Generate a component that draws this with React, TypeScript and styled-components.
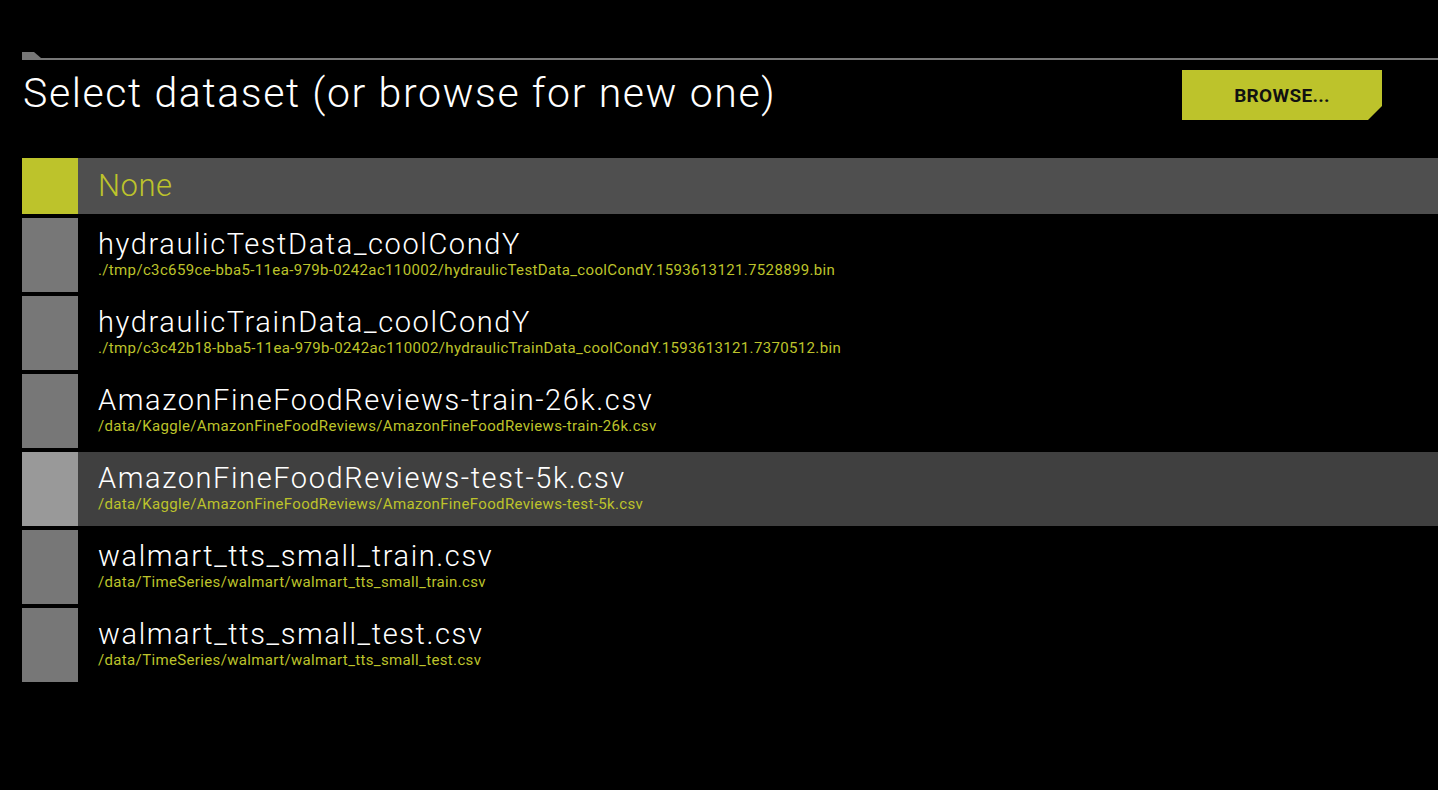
import React from 'react';
import styled, { createGlobalStyle } from 'styled-components';

const GlobalStyle = createGlobalStyle`
  html, body {
    margin: 0;
    padding: 0;
    background: #000000;
    font-family: Roboto, "Liberation Sans", sans-serif;
  }
`;

type Dataset = {
  name: string;
  path: string;
};

const datasets: Dataset[] = [
  {
    name: 'hydraulicTestData_coolCondY',
    path: './tmp/c3c659ce-bba5-11ea-979b-0242ac110002/hydraulicTestData_coolCondY.1593613121.7528899.bin',
  },
  {
    name: 'hydraulicTrainData_coolCondY',
    path: './tmp/c3c42b18-bba5-11ea-979b-0242ac110002/hydraulicTrainData_coolCondY.1593613121.7370512.bin',
  },
  {
    name: 'AmazonFineFoodReviews-train-26k.csv',
    path: '/data/Kaggle/AmazonFineFoodReviews/AmazonFineFoodReviews-train-26k.csv',
  },
  {
    name: 'AmazonFineFoodReviews-test-5k.csv',
    path: '/data/Kaggle/AmazonFineFoodReviews/AmazonFineFoodReviews-test-5k.csv',
  },
  {
    name: 'walmart_tts_small_train.csv',
    path: '/data/TimeSeries/walmart/walmart_tts_small_train.csv',
  },
  {
    name: 'walmart_tts_small_test.csv',
    path: '/data/TimeSeries/walmart/walmart_tts_small_test.csv',
  },
];

const App: React.FC = () => {
  const hovered = 3;
  return (
    <>
      <GlobalStyle />
      <StyledPage>
        <StyledDivider>
          <StyledTab />
        </StyledDivider>
        <StyledHeader>
          <StyledTitle>Select dataset (or browse for new one)</StyledTitle>
          <StyledBrowse type="button">BROWSE...</StyledBrowse>
        </StyledHeader>
        <StyledList>
          <StyledNoneRow>
            <StyledSquare $tone="selected" />
            <StyledNoneLabel>None</StyledNoneLabel>
          </StyledNoneRow>
          {datasets.map((d, i) => (
            <StyledRow key={d.path} $active={i === hovered}>
              <StyledSquare $tone={i === hovered ? 'hover' : 'idle'} />
              <StyledText>
                <StyledName>{d.name}</StyledName>
                <StyledPath>{d.path}</StyledPath>
              </StyledText>
            </StyledRow>
          ))}
        </StyledList>
      </StyledPage>
    </>
  );
};

const StyledPage = styled.div`
  padding: 52px 0 0 22px;
  min-height: 790px;
  box-sizing: border-box;
  background: #000000;
`;

const StyledDivider = styled.div`
  position: relative;
  height: 6px;
  border-bottom: 2px solid #777777;
`;

const StyledTab = styled.div`
  position: absolute;
  left: 0;
  top: 0;
  width: 19px;
  height: 6px;
  background: #777777;
  clip-path: polygon(0 0, 12px 0, 19px 6px, 0 6px);
`;

const StyledHeader = styled.div`
  display: flex;
  align-items: center;
  justify-content: space-between;
  padding: 10px 56px 0 0;
  height: 50px;
`;

const StyledTitle = styled.h1`
  margin: -5px 0 0 1px;
  color: #ffffff;
  font-weight: 300;
  font-size: 41px;
  letter-spacing: 1.6px;
  line-height: 50px;
`;

const StyledBrowse = styled.button`
  width: 200px;
  height: 50px;
  border: none;
  background: #bdc32b;
  color: #111111;
  font-family: Roboto, "Liberation Sans", sans-serif;
  font-weight: 700;
  font-size: 19px;
  letter-spacing: 0.3px;
  clip-path: polygon(0 0, 100% 0, 100% calc(100% - 14px), calc(100% - 14px) 100%, 0 100%);
  cursor: pointer;
`;

const StyledList = styled.div`
  display: flex;
  flex-direction: column;
  gap: 4px;
  margin-top: 38px;
`;

const StyledNoneRow = styled.div`
  display: flex;
  align-items: center;
  height: 56px;
  background: #4f4f4f;
`;

const StyledNoneLabel = styled.span`
  padding: 0 0 2px 20px;
  color: #bdc32b;
  font-size: 31px;
  font-weight: 300;
  letter-spacing: 0.5px;
`;

const StyledRow = styled.div<{ $active: boolean }>`
  display: flex;
  height: 74px;
  background: ${({ $active }) => ($active ? '#404040' : 'transparent')};
`;

const StyledSquare = styled.div<{ $tone: 'selected' | 'hover' | 'idle' }>`
  flex: 0 0 56px;
  height: 100%;
  background: ${({ $tone }) => ($tone === 'selected' ? '#bdc32b' : $tone === 'hover' ? '#999999' : '#777777')};
`;

const StyledText = styled.div`
  display: flex;
  flex-direction: column;
  padding: 9px 0 0 20px;
`;

const StyledName = styled.div`
  color: #ffffff;
  font-size: 29px;
  font-weight: 300;
  letter-spacing: 1.6px;
  line-height: 35px;
`;

const StyledPath = styled.div`
  color: #bdc32b;
  font-size: 15px;
  font-weight: 400;
  letter-spacing: 0.35px;
  line-height: 16px;
`;

export default App;
